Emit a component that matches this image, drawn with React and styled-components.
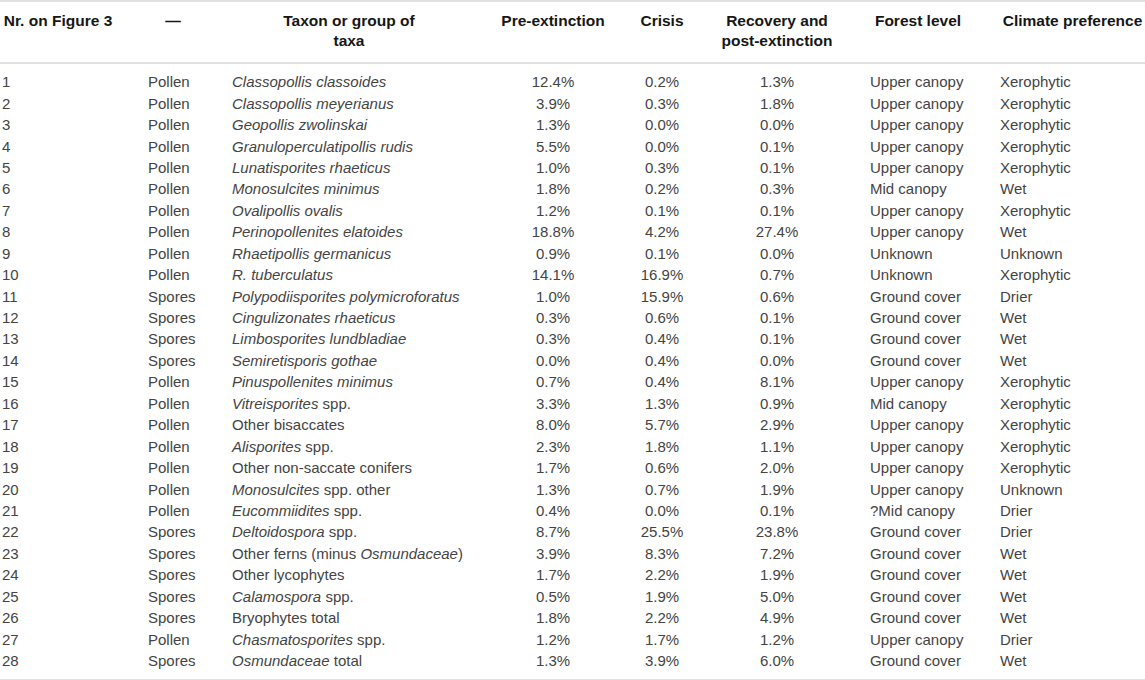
import styled, { createGlobalStyle } from "styled-components";

const GlobalStyle = createGlobalStyle`
  html, body {
    margin: 0;
    padding: 0;
    background: #ffffff;
  }
  body {
    font-family: "Liberation Sans", Arial, sans-serif;
  }
`;

const rows = [
  ["Pollen", <><i>Classopollis classoides</i></>, "12.4%", "0.2%", "1.3%", "Upper canopy", "Xerophytic"],
  ["Pollen", <><i>Classopollis meyerianus</i></>, "3.9%", "0.3%", "1.8%", "Upper canopy", "Xerophytic"],
  ["Pollen", <><i>Geopollis zwolinskai</i></>, "1.3%", "0.0%", "0.0%", "Upper canopy", "Xerophytic"],
  ["Pollen", <><i>Granuloperculatipollis rudis</i></>, "5.5%", "0.0%", "0.1%", "Upper canopy", "Xerophytic"],
  ["Pollen", <><i>Lunatisporites rhaeticus</i></>, "1.0%", "0.3%", "0.1%", "Upper canopy", "Xerophytic"],
  ["Pollen", <><i>Monosulcites minimus</i></>, "1.8%", "0.2%", "0.3%", "Mid canopy", "Wet"],
  ["Pollen", <><i>Ovalipollis ovalis</i></>, "1.2%", "0.1%", "0.1%", "Upper canopy", "Xerophytic"],
  ["Pollen", <><i>Perinopollenites elatoides</i></>, "18.8%", "4.2%", "27.4%", "Upper canopy", "Wet"],
  ["Pollen", <><i>Rhaetipollis germanicus</i></>, "0.9%", "0.1%", "0.0%", "Unknown", "Unknown"],
  ["Pollen", <><i>R. tuberculatus</i></>, "14.1%", "16.9%", "0.7%", "Unknown", "Xerophytic"],
  ["Spores", <><i>Polypodiisporites polymicroforatus</i></>, "1.0%", "15.9%", "0.6%", "Ground cover", "Drier"],
  ["Spores", <><i>Cingulizonates rhaeticus</i></>, "0.3%", "0.6%", "0.1%", "Ground cover", "Wet"],
  ["Spores", <><i>Limbosporites lundbladiae</i></>, "0.3%", "0.4%", "0.1%", "Ground cover", "Wet"],
  ["Spores", <><i>Semiretisporis gothae</i></>, "0.0%", "0.4%", "0.0%", "Ground cover", "Wet"],
  ["Pollen", <><i>Pinuspollenites minimus</i></>, "0.7%", "0.4%", "8.1%", "Upper canopy", "Xerophytic"],
  ["Pollen", <><i>Vitreisporites</i> spp.</>, "3.3%", "1.3%", "0.9%", "Mid canopy", "Xerophytic"],
  ["Pollen", <>Other bisaccates</>, "8.0%", "5.7%", "2.9%", "Upper canopy", "Xerophytic"],
  ["Pollen", <><i>Alisporites</i> spp.</>, "2.3%", "1.8%", "1.1%", "Upper canopy", "Xerophytic"],
  ["Pollen", <>Other non-saccate conifers</>, "1.7%", "0.6%", "2.0%", "Upper canopy", "Xerophytic"],
  ["Pollen", <><i>Monosulcites</i> spp. other</>, "1.3%", "0.7%", "1.9%", "Upper canopy", "Unknown"],
  ["Pollen", <><i>Eucommiidites</i> spp.</>, "0.4%", "0.0%", "0.1%", "?Mid canopy", "Drier"],
  ["Spores", <><i>Deltoidospora</i> spp.</>, "8.7%", "25.5%", "23.8%", "Ground cover", "Drier"],
  ["Spores", <>Other ferns (minus <i>Osmundaceae</i>)</>, "3.9%", "8.3%", "7.2%", "Ground cover", "Wet"],
  ["Spores", <>Other lycophytes</>, "1.7%", "2.2%", "1.9%", "Ground cover", "Wet"],
  ["Spores", <><i>Calamospora</i> spp.</>, "0.5%", "1.9%", "5.0%", "Ground cover", "Wet"],
  ["Spores", <>Bryophytes total</>, "1.8%", "2.2%", "4.9%", "Ground cover", "Wet"],
  ["Pollen", <><i>Chasmatosporites</i> spp.</>, "1.2%", "1.7%", "1.2%", "Upper canopy", "Drier"],
  ["Spores", <><i>Osmundaceae</i> total</>, "1.3%", "3.9%", "6.0%", "Ground cover", "Wet"],
];

const widths = [146, 84, 268, 140, 78, 152, 130, 147];

export default function App() {
  return (
    <>
      <GlobalStyle />
      <Table>
        <colgroup>
          {widths.map((w, i) => (
            <col key={i} style={{ width: w }} />
          ))}
        </colgroup>
        <thead>
          <tr>
            <Th>
              <HeadText>Nr. on Figure 3</HeadText>
            </Th>
            <Th>
              <HeadText>—</HeadText>
            </Th>
            <Th>
              <HeadText>
                Taxon or group of
                <br />
                taxa
              </HeadText>
            </Th>
            <Th>
              <HeadText>Pre-extinction</HeadText>
            </Th>
            <Th>
              <HeadText>Crisis</HeadText>
            </Th>
            <Th>
              <HeadText>
                Recovery and
                <br />
                post-extinction
              </HeadText>
            </Th>
            <Th>
              <HeadText>Forest level</HeadText>
            </Th>
            <Th $last>
              <HeadText>Climate preference</HeadText>
            </Th>
          </tr>
        </thead>
        <tbody>
          {rows.map((r, i) => (
            <Row key={i}>
              <Td>{i + 1}</Td>
              <Td>{r[0]}</Td>
              <Td>{r[1]}</Td>
              <Td $center>{r[2]}</Td>
              <Td $center>{r[3]}</Td>
              <Td $center>{r[4]}</Td>
              <Td>{r[5]}</Td>
              <Td $last>{r[6]}</Td>
            </Row>
          ))}
        </tbody>
      </Table>
    </>
  );
}

const Table = styled.table`
  width: 1145px;
  table-layout: fixed;
  border-collapse: collapse;
  border-top: 2px solid #e1e1e1;
  border-bottom: 2px solid #e1e1e1;
  font-size: 15px;
`;

const Th = styled.th`
  padding: 9px ${(props) => (props.$last ? "0" : "32px")} 11px 2px;
  vertical-align: top;
  border-bottom: 2px solid #e1e1e1;
`;

const HeadText = styled.div`
  display: flex;
  justify-content: center;
  font-size: 15.5px;
  line-height: 20px;
  font-weight: bold;
  color: #161616;
  text-align: center;
  white-space: nowrap;
`;

const Row = styled.tr`
  &:first-child td {
    padding-top: 7.2px;
  }

  &:last-child td {
    padding-bottom: 7.7px;
  }
`;

const Td = styled.td`
  padding: 0 ${(props) => (props.$last ? "0" : "32px")} 0 2px;
  line-height: 21.44px;
  color: #444444;
  white-space: nowrap;
  text-align: ${(props) => (props.$center ? "center" : "left")};

  i {
    font-style: italic;
  }
`;
